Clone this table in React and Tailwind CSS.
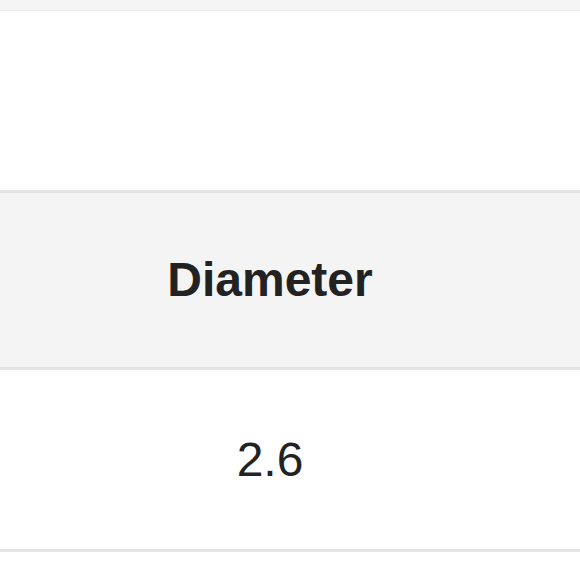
export default function App() {
  return (
    <div
      className="w-[580px] h-[580px] bg-white overflow-hidden text-[#222222]"
      style={{ fontFamily: '"Liberation Sans", Arial, sans-serif' }}
    >
      {/* Top strip */}
      <div className="h-[11px] bg-[#f5f5f5] border-b border-[#ececec]" />
      <div className="h-[179px]" />

      {/* Table */}
      <div className="border-t-[3px] border-[#e4e4e4]">
        <div className="grid grid-cols-[540px_1fr] h-[174px] bg-[#f4f4f4] items-center">
          <div className="text-center text-[48px] font-bold leading-none">Diameter</div>
          <div />
        </div>
        <div className="grid grid-cols-[540px_1fr] h-[185px] border-t-[3px] border-b-[3px] border-[#e4e4e4] items-center">
          <div className="text-center text-[48px] leading-none">2.6</div>
          <div />
        </div>
      </div>
    </div>
  );
}
